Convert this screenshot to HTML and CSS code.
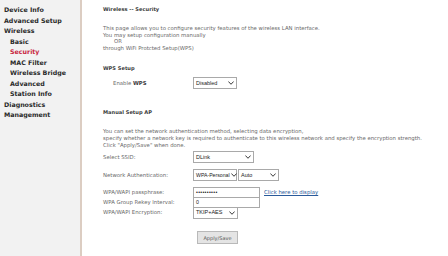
FILE: index.html
```html
<!DOCTYPE html>
<html lang="en">
<head>
  <meta charset="UTF-8">
  <title>Wireless -- Security</title>
  <link rel="stylesheet" href="styles.css">
</head>
<body>
  <div class="page">
    <nav class="menu">
      <a href="#">Device Info</a>
      <a href="#">Advanced Setup</a>
      <a href="#">Wireless</a>
      <a href="#" class="sub">Basic</a>
      <a href="#" class="sub active">Security</a>
      <a href="#" class="sub">MAC Filter</a>
      <a href="#" class="sub">Wireless Bridge</a>
      <a href="#" class="sub">Advanced</a>
      <a href="#" class="sub">Station Info</a>
      <a href="#">Diagnostics</a>
      <a href="#">Management</a>
    </nav>

    <main class="content">
      <h1 class="title">Wireless -- Security</h1>
      <p class="intro">
        This page allows you to configure security features of the wireless LAN interface.<br>
        You may setup configuration manually<br>
        <span class="or">OR</span><br>
        through WiFi Protcted Setup(WPS)
      </p>

      <h2 class="section">WPS Setup</h2>
      <div class="row wps">
        <span class="label indent">Enable <b>WPS</b></span>
        <span class="select w-dis">Disabled <svg class="chev" viewBox="0 0 8 5"><path d="M0.5 0.5 L4 4.2 L7.5 0.5" /></svg></span>
      </div>

      <h2 class="section manual">Manual Setup AP</h2>
      <p class="intro">
        You can set the network authentication method, selecting data encryption,<br>
        specify whether a network key is required to authenticate to this wireless network and specify the encryption strength.<br>
        Click "Apply/Save" when done.
      </p>

      <div class="form">
        <div class="row">
          <span class="label">Select SSID:</span>
          <span class="select w-ssid">DLink <svg class="chev" viewBox="0 0 8 5"><path d="M0.5 0.5 L4 4.2 L7.5 0.5" /></svg></span>
        </div>
        <div class="row">
          <span class="label">Network Authentication:</span>
          <span class="select w-auth">WPA-Personal <svg class="chev" viewBox="0 0 8 5"><path d="M0.5 0.5 L4 4.2 L7.5 0.5" /></svg></span>
          <span class="select w-auto">Auto <svg class="chev" viewBox="0 0 8 5"><path d="M0.5 0.5 L4 4.2 L7.5 0.5" /></svg></span>
        </div>
        <div class="row tight">
          <span class="label">WPA/WAPI passphrase:</span>
          <span class="input dots">&#8226;&#8226;&#8226;&#8226;&#8226;&#8226;&#8226;&#8226;&#8226;&#8226;</span>
          <a href="#" class="link">Click here to display</a>
        </div>
        <div class="row tight">
          <span class="label">WPA Group Rekey Interval:</span>
          <span class="input">0</span>
        </div>
        <div class="row tight">
          <span class="label">WPA/WAPI Encryption:</span>
          <span class="select w-enc">TKIP+AES <svg class="chev" viewBox="0 0 8 5"><path d="M0.5 0.5 L4 4.2 L7.5 0.5" /></svg></span>
        </div>
      </div>

      <div class="actions">
        <button class="btn">Apply/Save</button>
      </div>
    </main>
  </div>
</body>
</html>
```

FILE: styles.css
```css
/* Base */
* { margin: 0; padding: 0; box-sizing: border-box; }
body {
  background: #fff; font-family: "DejaVu Sans", Verdana, sans-serif;
  color: #6a6a6a; font-size: 5.35px;
}
.page { display: flex; height: 256px; overflow: hidden; }

/* Left menu */
.menu {
  width: 82px; flex-shrink: 0; background: #f2f2f2;
  border-right: 2px solid #dccdc2;
  display: flex; flex-direction: column;
  padding: 5px 0 0 4px;
}
.menu a {
  display: block; height: 10.5px; line-height: 10.5px;
  font-size: 6.3px; font-weight: bold; color: #2a2a2a;
  text-decoration: none; white-space: nowrap;
}
.menu a.sub { padding-left: 6px; }
.menu a.active { color: #c8243e; }

/* Content */
.content { flex: 1; padding: 6px 0 0 21px; line-height: 6.6px; white-space: nowrap; }
.title, .section { font-size: 5.1px; font-weight: bold; color: #3a3a3a; line-height: 6px; }
.intro { margin-top: 13px; }
.intro .or { padding-left: 11px; }
.section { margin-top: 14px; }
.section.manual { margin-top: 20px; }

/* Form rows */
.row { display: flex; align-items: center; height: 12px; }
.wps { margin-top: 6px; }
.label { width: 90px; flex-shrink: 0; }
.label.indent { padding-left: 10px; }
.label b { color: #3a3a3a; }
.form { margin-top: 3px; }
.form .row { margin-bottom: 6px; }
.form .row.tight { margin-bottom: -1px; height: 11px; }

.select, .input {
  display: inline-flex; align-items: center; justify-content: space-between; gap: 1.5px;
  height: 12px; border: 1px solid #a9a9a9; background: #fff;
  padding: 0 2px; font-family: "Liberation Sans", Arial, sans-serif;
  font-size: 5.5px; color: #222; white-space: nowrap; flex-shrink: 0;
}
.select + .select { margin-left: 1px; }
.chev { width: 6px; height: 4px; flex-shrink: 0; fill: none; stroke: #333; stroke-width: 1.3; }
.w-dis { width: 44px; }
.w-ssid { width: 61px; }
.w-auth { width: 44px; font-size: 5.2px; padding-right: 1.5px; }
.w-auto { width: 41px; }
.w-enc { width: 45px; }
.input { width: 67px; height: 11px; justify-content: flex-start; font-size: 5.3px; }
.input.dots { letter-spacing: 0.3px; }
.link { margin-left: 4px; color: #2a5a9a; text-decoration: underline; font-size: 5.35px; }

/* Button */
.actions { padding: 14px 0 0 94px; }
.btn {
  width: 41px; height: 13px; border: 1px solid #b9b9b9; background: #e4e4e4;
  font-family: "DejaVu Sans", Verdana, sans-serif; font-size: 5px; color: #555;
}
```
